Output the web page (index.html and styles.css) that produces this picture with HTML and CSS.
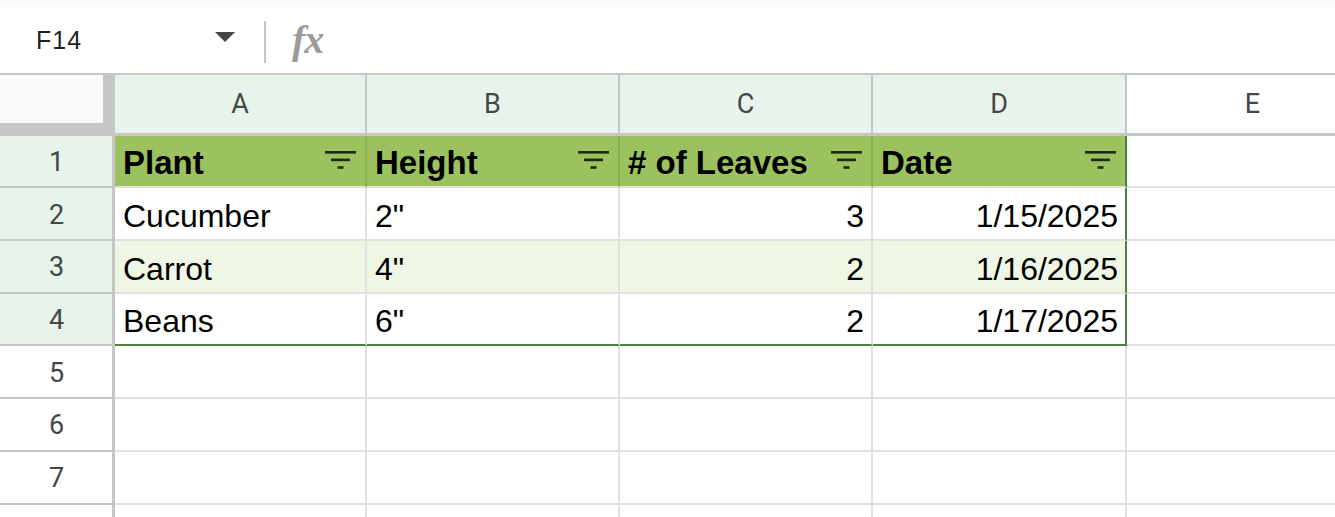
FILE: index.html
```html
<!DOCTYPE html>
<html lang="en">
<head>
    <meta charset="UTF-8">
    <title>Plants - Sheet</title>
    <link rel="stylesheet" href="styles.css">
</head>
<body>
    <div class="top-strip"></div>

    <div class="formula-bar">
        <div class="name-box">
            <span class="cell-ref">F14</span>
            <span class="caret"></span>
        </div>
        <div class="divider"></div>
        <span class="fx">fx</span>
    </div>

    <div class="sheet">
        <!-- column headers -->
        <div class="corner"></div>
        <div class="col-head active">A</div>
        <div class="col-head active">B</div>
        <div class="col-head active">C</div>
        <div class="col-head active">D</div>
        <div class="col-head">E</div>
        <div class="col-head"></div>

        <!-- row 1: table header -->
        <div class="row-head active">1</div>
        <div class="cell th">Plant<svg class="filter" viewBox="0 0 31 18"><rect x="0" y="0" width="31" height="2.6"/><rect x="6" y="7.6" width="19" height="2.6"/><rect x="12.5" y="15.2" width="6" height="2.6"/></svg></div>
        <div class="cell th">Height<svg class="filter" viewBox="0 0 31 18"><rect x="0" y="0" width="31" height="2.6"/><rect x="6" y="7.6" width="19" height="2.6"/><rect x="12.5" y="15.2" width="6" height="2.6"/></svg></div>
        <div class="cell th"># of Leaves<svg class="filter" viewBox="0 0 31 18"><rect x="0" y="0" width="31" height="2.6"/><rect x="6" y="7.6" width="19" height="2.6"/><rect x="12.5" y="15.2" width="6" height="2.6"/></svg></div>
        <div class="cell th edge">Date<svg class="filter" viewBox="0 0 31 18"><rect x="0" y="0" width="31" height="2.6"/><rect x="6" y="7.6" width="19" height="2.6"/><rect x="12.5" y="15.2" width="6" height="2.6"/></svg></div>
        <div class="cell"></div><div class="cell"></div>

        <!-- row 2 -->
        <div class="row-head active">2</div>
        <div class="cell">Cucumber</div>
        <div class="cell">2"</div>
        <div class="cell num">3</div>
        <div class="cell num edge">1/15/2025</div>
        <div class="cell"></div><div class="cell"></div>

        <!-- row 3 -->
        <div class="row-head active">3</div>
        <div class="cell alt">Carrot</div>
        <div class="cell alt">4"</div>
        <div class="cell alt num">2</div>
        <div class="cell alt num edge">1/16/2025</div>
        <div class="cell"></div><div class="cell"></div>

        <!-- row 4 -->
        <div class="row-head active">4</div>
        <div class="cell last">Beans</div>
        <div class="cell last">6"</div>
        <div class="cell last num">2</div>
        <div class="cell last num edge">1/17/2025</div>
        <div class="cell"></div><div class="cell"></div>

        <!-- empty rows -->
        <div class="row-head">5</div>
        <div class="cell"></div><div class="cell"></div><div class="cell"></div><div class="cell"></div><div class="cell"></div><div class="cell"></div>

        <div class="row-head">6</div>
        <div class="cell"></div><div class="cell"></div><div class="cell"></div><div class="cell"></div><div class="cell"></div><div class="cell"></div>

        <div class="row-head">7</div>
        <div class="cell"></div><div class="cell"></div><div class="cell"></div><div class="cell"></div><div class="cell"></div><div class="cell"></div>

        <div class="row-head"></div>
        <div class="cell"></div><div class="cell"></div><div class="cell"></div><div class="cell"></div><div class="cell"></div><div class="cell"></div>
    </div>
</body>
</html>
```

FILE: styles.css
```css
:root {
    --head-line: #c4c7c5;
    --grid-line: #e1e1e1;
    --head-bg: #e8f3eb;
    --table-head: #9bc25f;
    --table-head-line: #8db052;
    --table-alt: #eff6e4;
    --table-edge: #4a833f;
    --label: #444746;
}

* {
    margin: 0;
    padding: 0;
    box-sizing: border-box;
}

body {
    font-family: 'Liberation Sans', Arial, sans-serif;
    background-color: white;
    width: 1335px;
    height: 517px;
    overflow: hidden;
}

.top-strip {
    height: 4px;
    background-color: #f8fafd;
}

/* Formula bar */
.formula-bar {
    display: flex;
    align-items: center;
    height: 71px;
    border-bottom: 2px solid var(--head-line);
}

.name-box {
    display: flex;
    align-items: center;
    justify-content: space-between;
    width: 264px;
    padding-left: 36px;
    padding-right: 29px;
}

.cell-ref {
    font-size: 25px;
    letter-spacing: 1px;
    color: #1f1f1f;
    margin-top: 4px;
}

.caret {
    width: 0;
    height: 0;
    border-left: 10px solid transparent;
    border-right: 10px solid transparent;
    border-top: 10px solid var(--label);
    margin-top: -4px;
}

.divider {
    width: 2px;
    height: 42px;
    background-color: var(--head-line);
    margin-top: 6px;
}

.fx {
    font-family: 'Liberation Serif', serif;
    font-style: italic;
    font-weight: bold;
    font-size: 40px;
    color: #9b9b9b;
    margin-left: 26px;
    margin-top: 2px;
    letter-spacing: -1px;
}

/* Grid */
.sheet {
    display: grid;
    grid-template-columns: 115px 252px 253px 253px 254px 253px 253px;
    grid-template-rows: 60.7px;
    grid-auto-rows: 52.7px;
}

.corner {
    background-color: #f8f9fa;
    border-right: 12px solid var(--head-line);
    border-bottom: 13px solid var(--head-line);
}

.col-head {
    display: flex;
    align-items: center;
    justify-content: center;
    font-family: Roboto, sans-serif;
    font-size: 27px;
    color: var(--label);
    border-right: 2px solid var(--head-line);
    border-bottom: 3px solid var(--head-line);
    padding-top: 1px;
}

.row-head {
    display: flex;
    align-items: center;
    justify-content: center;
    font-family: Roboto, sans-serif;
    font-size: 27px;
    color: var(--label);
    border-right: 3px solid var(--head-line);
    border-bottom: 2px solid var(--head-line);
    padding-left: 1px;
    padding-top: 2px;
}

.col-head.active,
.row-head.active {
    background-color: var(--head-bg);
}

.cell {
    display: flex;
    align-items: flex-end;
    font-size: 32px;
    line-height: 36px;
    color: #000;
    padding: 0 7px 5px 8px;
    border-right: 2px solid var(--grid-line);
    border-bottom: 2px solid var(--grid-line);
    white-space: nowrap;
    overflow: hidden;
}

.cell.num {
    justify-content: flex-end;
}

.cell.th {
    justify-content: space-between;
    font-size: 33px;
    font-weight: bold;
    background-color: var(--table-head);
    border-right-color: var(--table-head-line);
}

.cell.alt {
    background-color: var(--table-alt);
}

.cell.edge {
    border-right: 2px solid var(--table-edge);
}

.cell.last {
    border-bottom: 2px solid var(--table-edge);
}

.filter {
    width: 31px;
    height: 18px;
    align-self: center;
    margin-right: 2px;
    margin-top: 2px;
    fill: #1d2b12;
}
```
